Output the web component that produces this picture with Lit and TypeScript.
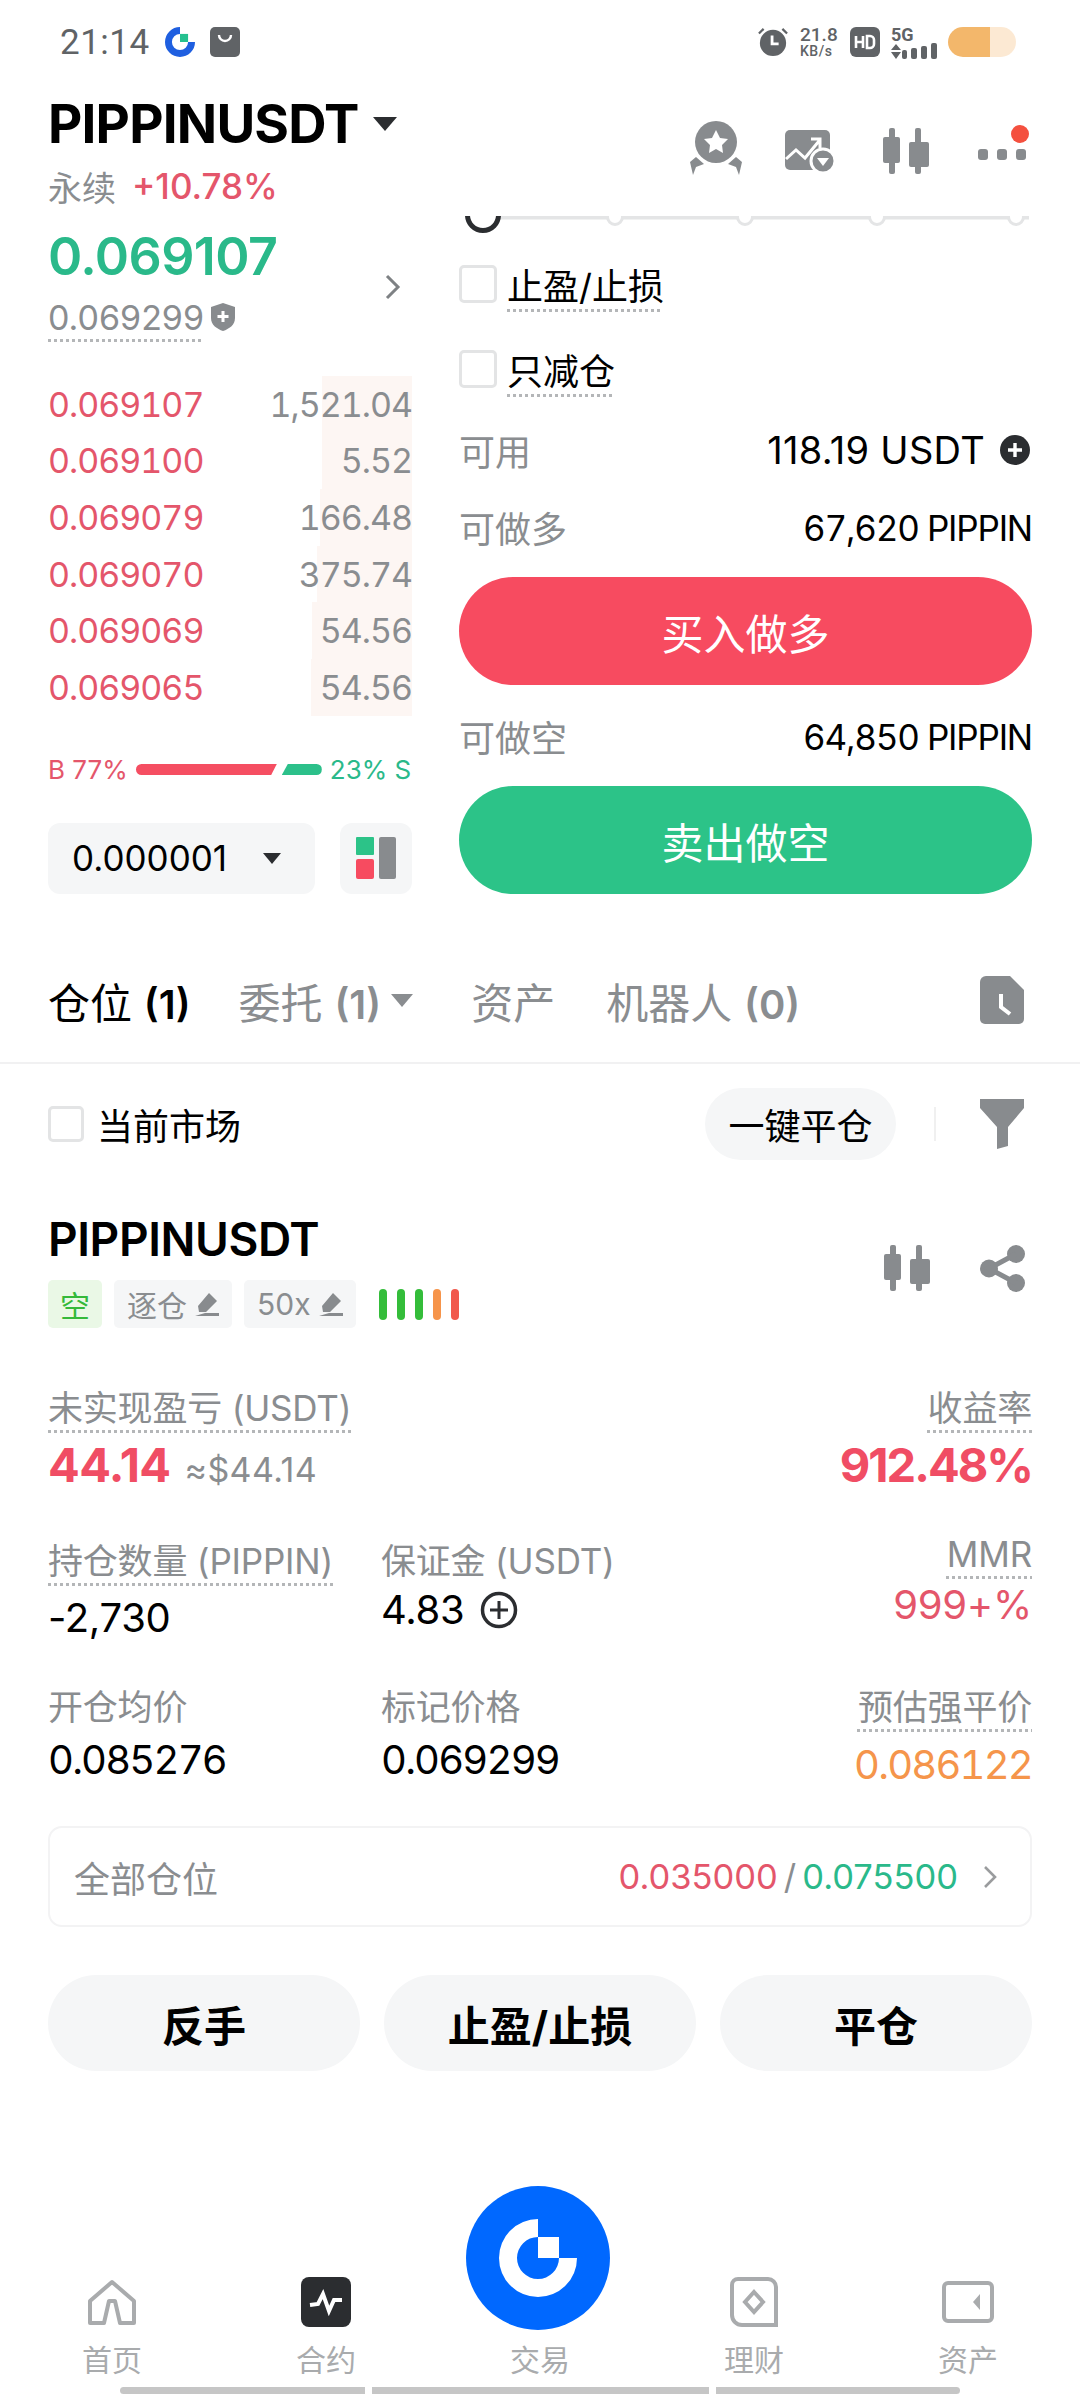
import { LitElement, html, css, svg } from "lit";
import { customElement } from "lit/decorators.js";

const logo = (ring: string, sq: string) => svg`
  <path fill=${ring} d="M72 33A39 39 0 1 0 111 72H93A21 21 0 1 1 72 51Z"/>
  <rect fill=${sq} x="72" y="51" width="21" height="21"/>`;

const candle = html`<svg class="ic-candle" viewBox="0 0 46 46" fill="#888b8e">
  <rect x="6" y="0" width="6" height="46" rx="2"/><rect x="0" y="9" width="17" height="26" rx="2"/>
  <rect x="32" y="0" width="6" height="46" rx="2"/><rect x="26" y="14" width="20" height="25" rx="2"/></svg>`;

const check = html`<span class="check"></span>`;

const depth = [
  ["0.069107", "1,521.04", 90],
  ["0.069100", "5.52", 90],
  ["0.069079", "166.48", 92],
  ["0.069070", "375.74", 95],
  ["0.069069", "54.56", 100],
  ["0.069065", "54.56", 101],
] as const;

@customElement("app-root")
export class AppRoot extends LitElement {
  static styles = css`
    :host { display: block; width: 1080px; height: 2400px; overflow: hidden; background: #fff; color: #000;
      font-family: Inter, "Noto Sans CJK SC", sans-serif; font-size: 34px; }
    svg { display: block; flex: none; }
    .dot { text-decoration: underline dotted #b4b6b8 3px; text-underline-offset: 9px; text-decoration-skip-ink: none; }
    .gray { color: #8a8d90; }
    .red { color: #e4566b; }
    .green { color: #2ab98a; }

    .status { height: 84px; display: flex; align-items: center; padding: 0 64px 0 60px; color: #606366; box-sizing: border-box; }
    .time { font: 400 35px Roboto, sans-serif; letter-spacing: .5px; width: 105px; }
    .st-logo { width: 30px; height: 30px; }
    .shop { width: 30px; height: 30px; margin-left: 15px; }
    .st-right { margin-left: auto; display: flex; align-items: center; }
    .alarm { width: 30px; height: 30px; }
    .speed { width: 40px; margin: 0 10px 0 12px; font: 500 19px/18px Roboto, sans-serif; }
    .speed small { display: block; font-size: 14px; line-height: 14px; letter-spacing: .5px; }
    .hd { width: 30px; height: 30px; }
    .sig { width: 46px; margin: 0 11px; display: flex; flex-direction: column; font: 700 18px/17px Roboto, sans-serif; }
    .sig svg { width: 46px; height: 16px; }
    .batt { width: 68px; height: 30px; border-radius: 15px; background: linear-gradient(90deg, #f3b76b 0 42px, #fce9d3 42px); }

    .main { display: grid; grid-template-columns: 364px 573px; column-gap: 47px; padding: 6px 48px 0; height: 804px; box-sizing: border-box; }
    .left, .right { display: flex; flex-direction: column; min-width: 0; }
    .title { height: 68px; display: flex; align-items: center; gap: 14px; font-size: 53px; font-weight: 700; letter-spacing: -.8px; white-space: nowrap; }
    .caret { width: 0; height: 0; border-left: 12px solid transparent; border-right: 12px solid transparent; border-top: 14px solid #2b2d30; }
    .sub { height: 56px; display: flex; align-items: center; gap: 16px; }
    .sub b { font-weight: 500; font-size: 35px; }
    .pricebox { display: flex; align-items: center; justify-content: space-between; height: 132px; }
    .price { font-size: 52px; font-weight: 600; line-height: 80px; letter-spacing: -.6px; }
    .mark { display: flex; align-items: center; gap: 6px; height: 52px; font-size: 34px; margin-top: -6px; }
    .shield { width: 26px; height: 30px; }
    .chev { width: 18px; height: 26px; margin: 14px 10px 0 0; }

    .book { margin-top: 30px; }
    .row { position: relative; height: 56.6px; display: flex; align-items: center; justify-content: space-between; font-size: 34px; letter-spacing: -1px; font-variant-numeric: tabular-nums; }
    .row span { position: relative; }
    .row .bar { position: absolute; top: 0; right: 0; bottom: 0; background: #fdf6f3; }
    .ratio { margin-top: 34px; height: 40px; display: flex; align-items: center; font-size: 26px; white-space: nowrap; }
    .rb { height: 11px; width: 141px; margin: 0 5px 0 8px; background: #f54e62; border-radius: 6px 0 0 6px; clip-path: polygon(0 0, 100% 0, 96% 100%, 0 100%); }
    .gb { height: 11px; width: 40px; margin-right: 8px; background: #2cc08a; border-radius: 0 6px 6px 0; clip-path: polygon(15% 0, 100% 0, 100% 100%, 0 100%); }
    .ctrls { margin-top: 33px; display: flex; justify-content: space-between; height: 71px; }
    .sel { width: 267px; border-radius: 12px; background: #f5f6f7; display: flex; align-items: center; justify-content: space-between; padding: 0 34px 0 24px; box-sizing: border-box; font-size: 35px; }
    .sel .caret { border-left-width: 9px; border-right-width: 9px; border-top-width: 11px; }
    .lay { width: 72px; border-radius: 12px; background: #f5f6f7; display: flex; align-items: center; justify-content: center; }
    .lay svg { width: 40px; height: 42px; }

    .tools { height: 110px; display: flex; align-items: center; justify-content: flex-end; padding-top: 12px; box-sizing: border-box; gap: 46px; padding-right: 6px; }
    .ic-candle { width: 46px; height: 46px; }
    .tools .medal { width: 52px; height: 54px; margin: -6px -3px 0 0; }
    .tools .chart { width: 50px; height: 42px; margin-right: 2px; }
    .more { position: relative; width: 48px; display: flex; justify-content: space-between; margin: 6px 0 0 3px; }
    .more i { width: 10px; height: 11px; border-radius: 3px; background: #888b8e; }
    .more u { position: absolute; right: -3px; top: -24px; width: 18px; height: 18px; border-radius: 50%; background: #f4503f; }
    .slider { height: 20px; width: 573px; margin-top: 16px; overflow: hidden; }
    .opt { height: 85px; display: flex; align-items: center; gap: 10px; font-size: 36px; }
    .opt.first { margin-top: 5px; }
    .check { width: 32px; height: 32px; border: 3px solid #e3e4e5; border-radius: 5px; box-sizing: content-box; flex: none; }
    .kv { display: flex; align-items: center; justify-content: space-between; height: 76px; font-size: 36px; }
    .kv.low { height: 78px; }
    .kv .v { display: flex; align-items: center; gap: 15px; font-size: 38px; padding-right: 2px; letter-spacing: .3px; }
    .kv .v2 { font-size: 35px; letter-spacing: -1.2px; padding: 2px 0 0; font-variant-numeric: tabular-nums; }
    .plus { width: 30px; height: 30px; }
    .cta { height: 108px; border-radius: 54px; display: flex; align-items: center; justify-content: center; color: #fff; font-size: 42px; }
    .buy { background: #f74b60; margin-top: 12px; }
    .sell { background: #2cc388; }
    .kv.short { height: 101px; }

    .tabs { margin-top: 50px; height: 124px; border-bottom: 2px solid #f1f1f2; display: flex; align-items: center; padding: 0 56px 0 48px; font-size: 42px; color: #8a8d90; }
    .tabs span { white-space: nowrap; }
    .tabs .a { color: #000; }
    .tabs b { font-weight: 600; font-size: 40px; }
    .tabs .t2 { margin-left: 48px; display: flex; align-items: center; gap: 10px; }
    .tabs .t2 .caret { border-top-color: #8a8d90; border-left-width: 11px; border-right-width: 11px; border-top-width: 13px; }
    .tabs .t3 { margin-left: 58px; }
    .tabs .t4 { margin-left: 51px; }
    .tabs svg { margin-left: auto; width: 44px; height: 48px; }
    .filter { height: 119px; display: flex; align-items: center; padding: 0 56px 0 48px; font-size: 36px; }
    .filter .check { width: 30px; height: 30px; margin-right: 13px; }
    .close { margin-left: auto; height: 72px; width: 191px; border-radius: 36px; background: #f5f6f7; display: flex; align-items: center; justify-content: center; }
    .vsep { width: 2px; height: 34px; background: #f0f0f0; margin: 0 44px 0 38px; }
    .filter svg { width: 44px; height: 50px; }

    .pos { margin-top: 26px; padding: 0 54px 0 48px; display: flex; align-items: center; justify-content: space-between; }
    .pos h2 { margin: 0; font-size: 46px; line-height: 60px; font-weight: 600; letter-spacing: -.4px; }
    .tags { margin-top: 11px; display: flex; align-items: center; height: 48px; gap: 12px; }
    .tag { height: 48px; border-radius: 5px; background: #f5f6f7; color: #8a8d90; display: flex; align-items: center; gap: 8px; padding: 0 13px; font-size: 30px; box-sizing: border-box; }
    .tag svg { width: 24px; height: 24px; }
    .tag.k { background: #eaf8e6; color: #35b93a; width: 54px; padding: 0; justify-content: center; }
    .pills { display: flex; gap: 10px; margin-left: 11px; }
    .pills i { width: 8px; height: 31px; border-radius: 4px; background: #34bd3a; }
    .pills i:nth-child(4) { background: #f6944a; }
    .pills i:nth-child(5) { background: #f1584c; }
    .acts { display: flex; gap: 50px; }
    .share { width: 46px; height: 47px; }

    .stats { margin: 58px 48px 0; display: grid; grid-template-columns: 333px 1fr auto; row-gap: 41px; }
    .c { display: flex; flex-direction: column; align-items: flex-start; }
    .c.wide { grid-column: 1 / 3; }
    .c.e { align-items: flex-end; grid-column: 3; }
    .c.r3 { margin-top: 2px; }
    .lb { font-size: 35px; line-height: 44px; color: #8a8d90; white-space: nowrap; letter-spacing: -.2px; }
    .val { font-size: 40px; line-height: 48px; margin-top: 11px; display: flex; align-items: center; gap: 16px; letter-spacing: -1.8px; font-variant-numeric: tabular-nums; }
    .val.free { font-variant-numeric: normal; letter-spacing: -.3px; }
    .big { font-size: 47px; font-weight: 700; line-height: 56px; margin-top: 7px; color: #f04d64; letter-spacing: -.6px; display: flex; align-items: baseline; gap: 14px; }
    .big small { font-size: 34px; font-weight: 400; color: #8a8d90; letter-spacing: .4px; }
    .big.pct { letter-spacing: -2px; }
    .m3 { margin-top: 3px; }
    .mmr { margin-top: -7px; }
    .m5 { margin-top: 5px; }
    .m7 { margin-top: 7px; }
    .m12 { margin-top: 12px; }
    .orange { color: #f5954b; }
    .val svg { width: 38px; height: 38px; }

    .all { margin: 37px 48px 0; height: 101px; box-sizing: border-box; border: 2px solid #f3f3f4; border-radius: 14px; display: flex; align-items: center; justify-content: space-between; padding: 0 32px 0 24px; font-size: 36px; }
    .all .r { display: flex; align-items: center; gap: 6px; font-size: 34.500px; }
    .all svg { width: 16px; height: 24px; margin-left: 18px; }
    .btns { margin: 48px 48px 0; display: grid; grid-template-columns: repeat(3, 1fr); gap: 24px; }
    .btns div { height: 96px; border-radius: 48px; background: #f5f6f7; display: flex; align-items: center; justify-content: center; font-size: 42px; font-weight: 700; }

    .nav { position: relative; margin-top: 206px; padding: 0 5px; display: grid; grid-template-columns: repeat(5, 1fr); }
    .nav div { display: flex; flex-direction: column; align-items: center; }
    .nav .ib { height: 50px; width: 60px; display: flex; align-items: center; justify-content: center; }
    .nav .lbl { margin-top: 13px; font-size: 30px; line-height: 40px; color: #a9abad; }
    .fab { position: absolute; left: 466px; top: -91px; width: 144px; height: 144px; }
    .gest { margin-top: 7px; display: flex; justify-content: center; gap: 7px; }
    .gest i { height: 7px; background: #c6c6c6; }
    .gest i:nth-child(1) { width: 245px; border-radius: 4px 0 0 4px; }
    .gest i:nth-child(2) { width: 337px; }
    .gest i:nth-child(3) { width: 244px; border-radius: 0 4px 4px 0; }
  `;

  render() {
    return html`
      <div class="status">
        <span class="time">21:14</span>
        <svg class="st-logo" viewBox="33 33 78 78">${logo("#1f5fe0", "#25c08f")}</svg>
        <svg class="shop" viewBox="0 0 30 30"><rect width="30" height="30" rx="5" fill="#606366"/><path d="M9 8a6 6 0 0 0 12 0" fill="none" stroke="#fff" stroke-width="2.4"/></svg>
        <div class="st-right">
          <svg class="alarm" viewBox="0 0 32 32"><circle cx="16" cy="17" r="14" fill="#606366"/><path d="M15 9v9h7" fill="none" stroke="#fff" stroke-width="3"/><path d="M1 7l5-5M31 7l-5-5" stroke="#606366" stroke-width="2.4"/></svg>
          <div class="speed">21.8<small>KB/s</small></div>
          <svg class="hd" viewBox="0 0 30 30"><rect width="30" height="30" rx="6" fill="#606366"/><path d="M6 9v12M13 9v12M6 15h7M17 9v12h3a4 4 0 0 0 4-4v-4a4 4 0 0 0-4-4z" fill="none" stroke="#fff" stroke-width="2.6"/></svg>
          <div class="sig"><span>5G</span>
            <svg viewBox="0 0 46 16" fill="#606366"><path d="M0 7l5-6 5 6zM0 9h10l-5 7z"/><rect x="11" y="7" width="5" height="9" rx="2"/><rect x="20" y="5" width="6" height="11" rx="2"/><rect x="30" y="3" width="6" height="13" rx="2"/><rect x="40" y="0" width="6" height="16" rx="2"/></svg>
          </div>
          <div class="batt"></div>
        </div>
      </div>

      <div class="main">
        <div class="left">
          <div class="title">PIPPINUSDT<span class="caret"></span></div>
          <div class="sub"><span class="gray">永续</span><b class="red">+10.78%</b></div>
          <div class="pricebox">
            <div>
              <div class="price green">0.069107</div>
              <div class="mark gray"><span class="dot">0.069299</span>
                <svg class="shield" viewBox="0 0 26 30"><path fill="#888b8e" d="M13 1l12 4v11c0 7-6 11-12 13C7 27 1 23 1 16V5z"/><path d="M13 9v11M7.500 14.500h11" stroke="#fff" stroke-width="3"/></svg>
              </div>
            </div>
            <svg class="chev" viewBox="0 0 18 26"><path d="M3 2l11 11L3 24" fill="none" stroke="#7e8184" stroke-width="3"/></svg>
          </div>
          <div class="book">
            ${depth.map(([p, q, w]) => html`<div class="row">
              <i class="bar" style="width:${w}px"></i>
              <span class="red">${p}</span><span class="gray">${q}</span></div>`)}
          </div>
          <div class="ratio">
            <span class="red">B 77%</span><i class="rb"></i><i class="gb"></i><span class="green">23% S</span>
          </div>
          <div class="ctrls">
            <div class="sel">0.000001<span class="caret"></span></div>
            <div class="lay"><svg viewBox="0 0 40 42"><rect x="0" width="18" height="18" rx="1" fill="#2cc388"/><rect x="0" y="22" width="18" height="20" rx="2" fill="#f74b60"/><rect x="23" width="17" height="42" rx="2" fill="#888b8e"/></svg></div>
          </div>
        </div>

        <div class="right">
          <div class="tools">
            <svg class="medal" viewBox="0 0 52 54">
              <circle cx="26" cy="21" r="21" fill="#888b8e"/>
              <path fill="#fff" d="M26 9l4 8 8 1-6 6 1 8-7-4-7 4 1-8-6-6 8-1z"/>
              <path fill="#888b8e" d="M6 36l8 7-8 3-3 8-3-13zM46 36l-8 7 8 3 3 8 3-13z"/>
            </svg>
            <svg class="chart" viewBox="0 0 50 42">
              <rect width="45" height="40" rx="5" fill="#888b8e"/>
              <path d="M1 29l10-9 9 8 14-17M26 9h9v9" fill="none" stroke="#fff" stroke-width="3"/>
              <circle cx="38" cy="31" r="12" fill="#888b8e" stroke="#fff" stroke-width="3"/>
              <path fill="#fff" d="M32 28h12l-6 8z"/>
            </svg>
            ${candle}
            <div class="more"><i></i><i></i><i></i><u></u></div>
          </div>
          <div class="slider">
            <svg viewBox="0 0 573 20" width="573" height="20">
              <rect x="24" y="0" width="546" height="3.500" fill="#e4e5e6"/>
              <g fill="#fff" stroke="#e4e5e6" stroke-width="3">
                <circle cx="156" cy="1" r="7.500"/><circle cx="286" cy="1" r="7.500"/><circle cx="418" cy="1" r="7.500"/><circle cx="557" cy="1" r="7.500"/>
              </g>
              <circle cx="24" cy="-1" r="15.500" fill="#fff" stroke="#2b2d30" stroke-width="5"/>
            </svg>
          </div>
          <div class="opt first">${check}<span class="dot">止盈/止损</span></div>
          <div class="opt">${check}<span class="dot">只减仓</span></div>
          <div class="kv low"><span class="gray">可用</span><span class="v">118.19 USDT
            <svg class="plus" viewBox="0 0 30 30"><circle cx="15" cy="15" r="15" fill="#2b2d30"/><path d="M15 8v14M8 15h14" stroke="#fff" stroke-width="3.400"/></svg></span></div>
          <div class="kv"><span class="gray">可做多</span><span class="v v2">67,620 PIPPIN</span></div>
          <div class="cta buy">买入做多</div>
          <div class="kv short"><span class="gray">可做空</span><span class="v v2">64,850 PIPPIN</span></div>
          <div class="cta sell">卖出做空</div>
        </div>
      </div>

      <div class="tabs">
        <span class="a">仓位 <b>(1)</b></span>
        <span class="t2"><span>委托 <b>(1)</b></span><i class="caret"></i></span>
        <span class="t3">资产</span>
        <span class="t4">机器人 <b>(0)</b></span>
        <svg viewBox="0 0 44 48"><path fill="#888b8e" d="M6 0h24l14 14v29a5 5 0 0 1-5 5H5a5 5 0 0 1-5-5V6a6 6 0 0 1 6-6z"/><path d="M21 18v13l9 7" fill="none" stroke="#fff" stroke-width="4"/></svg>
      </div>

      <div class="filter">
        ${check}<span>当前市场</span>
        <div class="close">一键平仓</div>
        <i class="vsep"></i>
        <svg viewBox="0 0 44 50"><path fill="#888b8e" d="M0 0h44v9L28 28v19l-11 3V28L0 9z"/></svg>
      </div>

      <div class="pos">
        <div>
          <h2>PIPPINUSDT</h2>
          <div class="tags">
            <span class="tag k">空</span>
            <span class="tag">逐仓<svg viewBox="0 0 24 24"><path fill="#888b8e" d="M14 1l8 8-11 11H4l-1-6zM0 24h24v-3H10z"/></svg></span>
            <span class="tag">50x<svg viewBox="0 0 24 24"><path fill="#888b8e" d="M14 1l8 8-11 11H4l-1-6zM0 24h24v-3H10z"/></svg></span>
            <span class="pills"><i></i><i></i><i></i><i></i><i></i></span>
          </div>
        </div>
        <div class="acts">
          ${candle}
          <svg class="share" viewBox="0 0 46 47" fill="#888b8e"><circle cx="36" cy="9" r="9"/><circle cx="9" cy="23.500" r="9"/><circle cx="36" cy="38" r="9"/><path d="M36 9L9 23.500 36 38" fill="none" stroke="#888b8e" stroke-width="5"/></svg>
        </div>
      </div>

      <div class="stats">
        <div class="c wide"><span class="lb dot">未实现盈亏 (USDT)</span><span class="big">44.14 <small>≈$44.14</small></span></div>
        <div class="c e"><span class="lb dot">收益率</span><span class="big pct">912.48%</span></div>
        <div class="c"><span class="lb dot">持仓数量 (PIPPIN)</span><span class="val free">-2,730</span></div>
        <div class="c"><span class="lb">保证金 (USDT)</span><span class="val m3 free">4.83
          <svg viewBox="0 0 38 38"><circle cx="19" cy="19" r="16.500" fill="none" stroke="#2b2d30" stroke-width="3.500"/><path d="M19 10v18M10 19h18" stroke="#2b2d30" stroke-width="3"/></svg></span></div>
        <div class="c e"><span class="lb dot mmr">MMR</span><span class="val m5 red free">999+%</span></div>
        <div class="c r3"><span class="lb">开仓均价</span><span class="val m7">0.085276</span></div>
        <div class="c r3"><span class="lb">标记价格</span><span class="val m7">0.069299</span></div>
        <div class="c e r3"><span class="lb dot">预估强平价</span><span class="val m12 orange">0.086122</span></div>
      </div>

      <div class="all">
        <span class="gray">全部仓位</span>
        <span class="r"><span class="red">0.035000</span><span class="gray">/</span><span class="green">0.075500</span>
          <svg viewBox="0 0 16 24"><path d="M3 2l10 10L3 22" fill="none" stroke="#9a9c9e" stroke-width="2.600"/></svg></span>
      </div>

      <div class="btns"><div>反手</div><div>止盈/止损</div><div>平仓</div></div>

      <div class="nav">
        <div><span class="ib"><svg width="48" height="46" viewBox="0 0 48 46"><path d="M24 3L46 22v22H32l-5-22h-6l-5 22H2V22z" fill="none" stroke="#a9abad" stroke-width="4" stroke-linejoin="round"/></svg></span><span class="lbl">首页</span></div>
        <div><span class="ib"><svg width="50" height="50" viewBox="0 0 50 50"><rect width="50" height="50" rx="8" fill="#2b2d30"/><path d="M9 28l8-1 5-10 6 17 5-11h8" fill="none" stroke="#fff" stroke-width="4"/></svg></span><span class="lbl">合约</span></div>
        <div><span class="ib"></span><span class="lbl">交易</span></div>
        <div><span class="ib"><svg width="48" height="50" viewBox="0 0 48 50"><path d="M8 2h30a8 8 0 0 1 8 8v38H12a10 10 0 0 1-10-10V8a6 6 0 0 1 6-6z" fill="none" stroke="#a9abad" stroke-width="4"/><path d="M24 15l9 10-9 10-9-10z" fill="none" stroke="#a9abad" stroke-width="4"/></svg></span><span class="lbl">理财</span></div>
        <div><span class="ib"><svg width="52" height="42" viewBox="0 0 52 42"><rect x="2" y="2" width="48" height="38" rx="4" fill="none" stroke="#a9abad" stroke-width="4"/><path d="M38 13l-7 8 7 8z" fill="#a9abad"/></svg></span><span class="lbl">资产</span></div>
        <svg class="fab" viewBox="0 0 144 144"><circle cx="72" cy="72" r="72" fill="#0068ff"/>${logo("#fff", "#fff")}</svg>
      </div>
      <div class="gest"><i></i><i></i><i></i></div>
    `;
  }
}
